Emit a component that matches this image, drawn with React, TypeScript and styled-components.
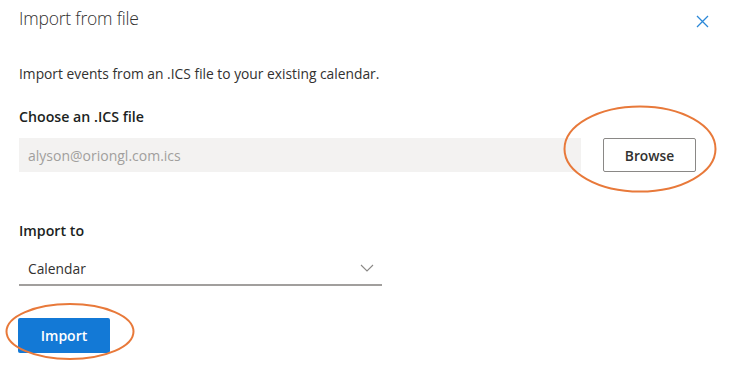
import React from "react";
import styled, { createGlobalStyle } from "styled-components";

const Global = createGlobalStyle`
  html, body { margin: 0; padding: 0; background: #ffffff; }
  body { font-family: "Open Sans", "Noto Sans", sans-serif; color: #323130; }
  * { box-sizing: border-box; }
`;

const Page = styled.div`
  position: relative;
  width: 730px;
  height: 368px;
  padding: 4px 22px 0 19px;
  display: flex;
  flex-direction: column;
  overflow: hidden;
`;

const Header = styled.div`
  display: flex;
  justify-content: space-between;
  align-items: center;
  height: 28px;
`;

const Title = styled.h1`
  margin: 0;
  font-size: 17.5px;
  font-weight: 300;
  line-height: 28px;
  color: #323130;
  letter-spacing: -0.2px;
`;

const CloseButton = styled.button`
  width: 16px;
  height: 16px;
  padding: 0;
  border: none;
  background: transparent;
  display: flex;
  align-items: center;
  justify-content: center;
  margin-top: 6px;
  margin-right: -2px;
`;

const Description = styled.p`
  margin: 32px 0 0;
  font-size: 13.8px;
  line-height: 20px;
  color: #323130;
`;

const Label = styled.div<{ $gap: number }>`
  margin-top: ${(p) => p.$gap}px;
  font-size: 14.2px;
  font-weight: 600;
  line-height: 20px;
  color: #201f1e;
`;

const FileRow = styled.div`
  margin-top: 11px;
  display: flex;
  align-items: center;
  gap: 22px;
`;

const FileField = styled.div`
  width: 562px;
  height: 34px;
  background: #f3f2f1;
  display: flex;
  align-items: center;
  padding-left: 9px;
  font-size: 14px;
  color: #a19f9d;
`;

const BrowseButton = styled.button`
  width: 93px;
  height: 34px;
  border: 1px solid #8a8886;
  border-radius: 2px;
  background: #ffffff;
  font-family: inherit;
  font-size: 13.8px;
  font-weight: 600;
  color: #323130;
  padding: 0;
`;

const Dropdown = styled.div`
  margin-top: 11px;
  width: 363px;
  height: 34px;
  border-bottom: 2px solid #a19f9d;
  display: flex;
  align-items: center;
  justify-content: space-between;
  padding: 0 8px 0 9px;
  font-size: 13.8px;
  color: #323130;
`;

const PrimaryButton = styled.button`
  margin-top: 32px;
  width: 92px;
  height: 35px;
  border: none;
  border-radius: 2px;
  background: #1379d6;
  color: #ffffff;
  font-family: inherit;
  font-size: 14px;
  font-weight: 600;
  padding: 0;
  margin-left: -1px;
`;

const Annotations = styled.svg`
  position: absolute;
  left: 0;
  top: 0;
  pointer-events: none;
`;

export default function App() {
  return (
    <>
      <Global />
      <Page>
        <Header>
          <Title>Import from file</Title>
          <CloseButton aria-label="Close">
            <svg width="13" height="13" viewBox="0 0 13 13">
              <path d="M1 1 L12 12 M12 1 L1 12" stroke="#2b88d8" strokeWidth="1.3" fill="none" />
            </svg>
          </CloseButton>
        </Header>
        <Description>Import events from an .ICS file to your existing calendar.</Description>
        <Label $gap={23}>Choose an .ICS file</Label>
        <FileRow>
          <FileField>alyson@oriongl.com.ics</FileField>
          <BrowseButton>Browse</BrowseButton>
        </FileRow>
        <Label $gap={49}>Import to</Label>
        <Dropdown>
          <span>Calendar</span>
          <svg width="14" height="8" viewBox="0 0 14 8">
            <path d="M1 1 L7 7 L13 1" stroke="#8a8886" strokeWidth="1.1" fill="none" />
          </svg>
        </Dropdown>
        <PrimaryButton>Import</PrimaryButton>
        <Annotations width="730" height="368" viewBox="0 0 730 368">
          <ellipse cx="640" cy="149" rx="75.5" ry="42.5" fill="none" stroke="#e8793a" strokeWidth="2" />
          <ellipse cx="70" cy="331.5" rx="63.5" ry="27.5" fill="none" stroke="#e8793a" strokeWidth="2" />
        </Annotations>
      </Page>
    </>
  );
}
